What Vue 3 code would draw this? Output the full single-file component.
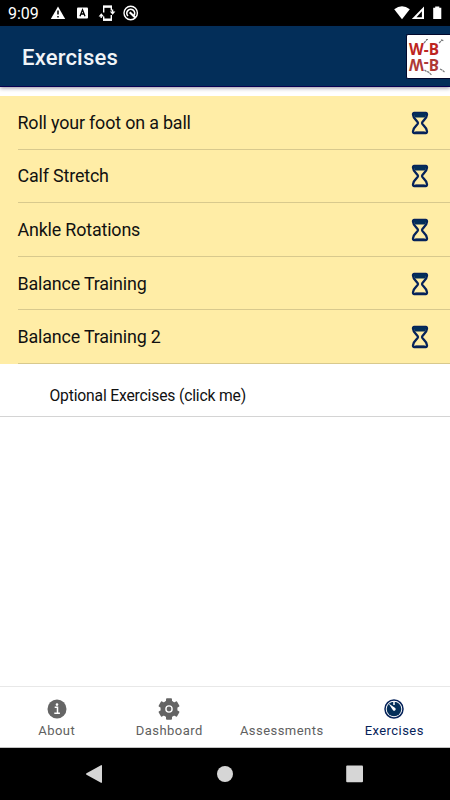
<script setup>
const exercises = [
  'Roll your foot on a ball',
  'Calf Stretch',
  'Ankle Rotations',
  'Balance Training',
  'Balance Training 2',
]

const tabs = [
  { name: 'About', icon: 'info' },
  { name: 'Dashboard', icon: 'gear' },
  { name: 'Assessments', icon: '' },
  { name: 'Exercises', icon: 'timer' },
]
</script>

<template>
  <div class="phone">
    <div class="status">
      <span class="clock">9:09</span>
      <svg class="status-left" width="92" height="18" viewBox="0 0 92 18">
        <path d="M8 2.5 15.2 15H.8z" fill="#fff" />
        <path d="M8 6.5v4M8 12v1.6" stroke="#000" stroke-width="1.5" />
        <rect x="27" y="3.5" width="11" height="11" rx="1" fill="#fff" />
        <path d="m30 12.2 2.5-6.5 2.5 6.5M30.8 10h3.4" fill="none" stroke="#000" stroke-width="1.3" />
        <path d="M53.7 8.5v-6h7.6v4M53.7 12.5v3.5h7.6v-5" fill="none" stroke="#fff" stroke-width="1.4" />
        <path d="M53 2.6h9M53 15.6h9" stroke="#fff" stroke-width="2.2" />
        <path d="M51.2 14v-2.5M62.6 5.5V8" fill="none" stroke="#fff" stroke-width="1.3" />
        <path d="m48.6 12.4 2.7-3.2 2.7 3.2zM59.8 7.5l2.8 3.2 2.8-3.2z" fill="#fff" />
        <circle cx="80.7" cy="9" r="6.7" fill="none" stroke="#fff" stroke-width="1.4" />
        <path d="M78 12a3.9 3.9 0 1 1 5.8-.4" fill="none" stroke="#fff" stroke-width="1.7" />
        <path d="m79.7 8.3 5.5 5.2" stroke="#fff" stroke-width="2.2" />
      </svg>
      <svg class="status-right" width="50" height="18" viewBox="0 0 50 18">
        <path d="M.2 5.2Q8-.6 15.8 5.2L8 15.2z" fill="#fff" />
        <path d="M30 2.5V15H17.8z" fill="#fff" />
        <path d="M27.9 7.3v6h-5.4z" fill="#000" />
        <path d="M39.2 3.8h2V2.4h4.1v1.4h2V15h-8.1z" fill="#fff" />
      </svg>
    </div>

    <header class="toolbar">
      <h1>Exercises</h1>
      <div class="logo">
        <svg width="43" height="43" viewBox="0 0 43 43">
          <g class="logo-text">
            <text x="2" y="20" textLength="30" lengthAdjust="spacingAndGlyphs" fill="#bd2421">W-B</text>
            <text
              x="2"
              y="-23.5"
              textLength="30"
              lengthAdjust="spacingAndGlyphs"
              fill="#ae3936"
              transform="scale(1 -1)"
            >W-B</text>
          </g>
          <path
            d="m17 8 3-3.5m-1 0h2M32 8l3-2.8m-1-.5 2.5 1M17.5 35l2 1.500 2 .5 3 3M33 34l2 1 2.500 2"
            fill="none"
            stroke="#77797b"
            stroke-width="1.200"
            stroke-dasharray="2.500 .6"
          />
        </svg>
      </div>
    </header>

    <main class="content">
      <ul class="list">
        <li v-for="exercise in exercises" :key="exercise">
          <div class="row">
            <span>{{ exercise }}</span>
            <svg width="18" height="24" viewBox="0 0 18 24">
              <path
                d="M3.2 2h11.600q1.300 0 1.200 1.700c-.2 4.600-5 6.100-5 8.300s4.800 3.700 5 8.300q.1 1.700-1.200 1.700H3.200q-1.300 0-1.200-1.700c.2-4.600 5-6.100 5-8.300S2.200 8.300 2 3.700Q1.900 2 3.200 2z"
                fill="#ffeda6"
                stroke="#06235a"
                stroke-width="2.3"
                stroke-linejoin="round"
              />
              <path d="M2.3 2h13.4L14.200 6.500H3.800z" fill="#032e59" />
              <path d="M3 22q.3-1.400 2-1.500h8q1.700.1 2 1.500z" fill="#06235a" />
            </svg>
          </div>
        </li>
      </ul>
      <div class="optional">Optional Exercises (click me)</div>
    </main>

    <nav class="tabs">
      <div v-for="tab in tabs" :key="tab.name" class="tab" :class="{ active: tab.icon === 'timer' }">
        <svg width="24" height="24" viewBox="0 0 24 24">
          <g v-if="tab.icon === 'info'">
            <circle cx="12" cy="12" r="9.5" fill="#656565" />
            <path d="M9.7 10.3h2.8v5.5M9.3 16.3h5.6" fill="none" stroke="#fff" stroke-width="1.5" />
            <circle cx="12" cy="7.6" r="1.3" fill="#fff" />
          </g>
          <g v-else-if="tab.icon === 'gear'">
            <g fill="#656565">
              <circle cx="12" cy="12" r="8.5" />
              <rect
                v-for="n in 6"
                :key="n"
                x="9"
                y="1.3"
                width="6"
                height="6"
                rx="1"
                :transform="`rotate(${n * 60} 12 12)`"
              />
            </g>
            <circle cx="12" cy="12" r="3.1" fill="#656565" stroke="#fff" stroke-width="1.4" />
          </g>
          <g v-else-if="tab.icon === 'timer'">
            <circle cx="12" cy="12" r="9" fill="#fff" stroke="#06235a" stroke-width="1.5" />
            <circle cx="12" cy="12" r="7.3" fill="#032e59" />
            <path d="M12 4v4" stroke="#fff" stroke-width="1.5" />
            <path d="M6.6 6.6 13.2 11a1.5 1.5 0 0 1-2.2 2.3z" fill="#fff" />
          </g>
        </svg>
        <span>{{ tab.name }}</span>
      </div>
    </nav>

    <div class="android-nav">
      <svg width="450" height="52" viewBox="0 0 450 52" fill="#d6d6d6">
        <path d="M86.5 25.2 101 17.2q1-.4 1 .7v16.2q0 1.1-1 .7L86.5 26.800q-1.200-.8 0-1.600z" />
        <circle cx="225" cy="26" r="8" />
        <rect x="346.2" y="17.5" width="16.8" height="16.8" rx="1" />
      </svg>
    </div>
  </div>
</template>

<style>
body {
  margin: 0;
}
</style>

<style scoped>
.phone {
  display: flex;
  flex-direction: column;
  width: 450px;
  height: 800px;
  overflow: hidden;
  background: #fff;
  color: #111;
  font-family: Roboto, sans-serif;
}

svg {
  display: block;
  flex: none;
}

.status {
  display: flex;
  align-items: center;
  flex: none;
  height: 26px;
  background: #000;
  color: #fff;
}

.clock {
  width: 42px;
  padding: 1px 0 0 8px;
  font-size: 16px;
}

.status-right {
  margin-left: auto;
  margin-right: 6px;
}

.toolbar {
  display: flex;
  align-items: center;
  justify-content: space-between;
  flex: none;
  box-sizing: border-box;
  height: 61px;
  padding-left: 22px;
  border-bottom: 1px solid #080050;
  background: #032e59;
  box-shadow: 0 1px 4px rgba(15, 0, 40, 0.45);
}

h1 {
  margin: 0;
  padding-top: 2px;
  color: #f1f4f7;
  font-size: 22px;
  font-weight: 500;
  letter-spacing: 0.2px;
}

.logo {
  border: 1px solid #02082c;
  border-right: 0;
  border-radius: 2px 0 0 2px;
  background: #fff;
}

.logo-text {
  font-family: 'Open Sans', sans-serif;
  font-size: 16px;
  font-weight: 700;
}

.content {
  flex: 1;
  padding-top: 9px;
}

.list {
  margin: 0;
  padding: 0;
  list-style: none;
  background: #ffeda6;
}

li {
  height: 53.6px;
  padding-left: 17.5px;
}

.row {
  display: flex;
  align-items: center;
  justify-content: space-between;
  box-sizing: border-box;
  height: 100%;
  padding-right: 21px;
  border-bottom: 1px solid #d8c98d;
  font-size: 17.9px;
  letter-spacing: -0.17px;
}

.row svg {
  margin-top: 1px;
}

.optional {
  box-sizing: border-box;
  height: 53px;
  padding: 22.5px 0 0 49.5px;
  border-bottom: 1px solid #d4d4d4;
  font-size: 15.7px;
  line-height: 20px;
  letter-spacing: -0.18px;
}

.tabs {
  display: grid;
  grid-template-columns: repeat(4, 1fr);
  flex: none;
  box-sizing: border-box;
  height: 62px;
  border-top: 1px solid #e8e8e8;
  border-bottom: 1px solid #c2c2c2;
}

.tab {
  display: flex;
  flex-direction: column;
  align-items: center;
  padding: 10px 0 0 1px;
  color: #606060;
  font-size: 13px;
  line-height: 20px;
  letter-spacing: 0.45px;
}

.active {
  color: #06235a;
}

.android-nav {
  flex: none;
  height: 52px;
  background: #000;
}
</style>
